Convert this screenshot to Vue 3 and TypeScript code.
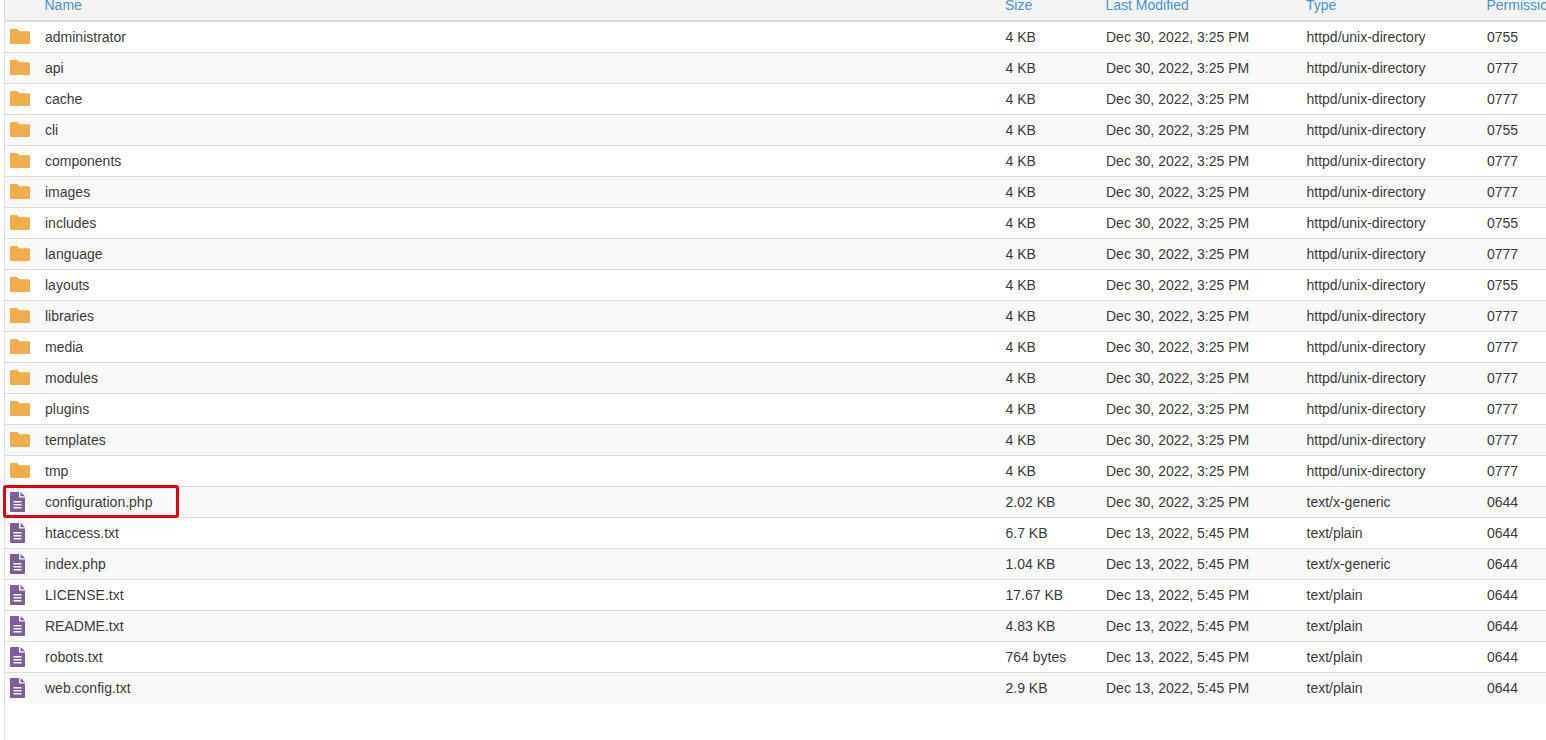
<script setup lang="ts">
interface Row { name: string; size: string; date: string; type: string; perm: string; kind: 'dir' | 'file'; marked?: boolean }
const D = 'Dec 30, 2022, 3:25 PM'
const E = 'Dec 13, 2022, 5:45 PM'
const U = 'httpd/unix-directory'
const dir = (name: string, perm: string): Row => ({ name, size: '4 KB', date: D, type: U, perm, kind: 'dir' })
const file = (name: string, size: string, type: string, date = E, marked = false): Row => ({ name, size, date, type, perm: '0644', kind: 'file', marked })
const rows: Row[] = [
  dir('administrator', '0755'), dir('api', '0777'), dir('cache', '0777'), dir('cli', '0755'),
  dir('components', '0777'), dir('images', '0777'), dir('includes', '0755'), dir('language', '0777'),
  dir('layouts', '0755'), dir('libraries', '0777'), dir('media', '0777'), dir('modules', '0777'),
  dir('plugins', '0777'), dir('templates', '0777'), dir('tmp', '0777'),
  file('configuration.php', '2.02 KB', 'text/x-generic', D, true),
  file('htaccess.txt', '6.7 KB', 'text/plain'),
  file('index.php', '1.04 KB', 'text/x-generic'),
  file('LICENSE.txt', '17.67 KB', 'text/plain'),
  file('README.txt', '4.83 KB', 'text/plain'),
  file('robots.txt', '764 bytes', 'text/plain'),
  file('web.config.txt', '2.9 KB', 'text/plain'),
]
</script>

<template>
  <div class="page">
    <div class="row head">
      <span></span>
      <a>Name</a><a>Size</a><a>Last Modified</a><a>Type</a><a>Permission</a>
    </div>
    <div v-for="r in rows" :key="r.name" class="row item">
      <span class="ico">
        <svg v-if="r.kind === 'dir'" class="folder" width="20" height="15" viewBox="0 0 20 15">
          <path fill="#f0ad4e" d="M1.200 0H7L9.500 2.300H18.800A1.200 1.200 0 0 1 20 3.500V13.800A1.200 1.200 0 0 1 18.800 15H1.200A1.200 1.200 0 0 1 0 13.800V1.200A1.200 1.200 0 0 1 1.200 0Z" />
        </svg>
        <svg v-else width="15" height="20" viewBox="0 0 15 20">
          <path fill="#7c5f9a" fill-rule="evenodd" d="M1 0H9V5.500H15V19A1 1 0 0 1 14 20H1A1 1 0 0 1 0 19V1A1 1 0 0 1 1 0ZM3.500 9V10.500H11.500V9ZM3.500 12V13.500H11.500V12ZM3.500 15V16.500H11.500V15Z" />
          <path fill="#7c5f9a" d="M10.500 0 15 4.300H10.500Z" />
        </svg>
      </span>
      <span class="name" :class="{ marked: r.marked }">{{ r.name }}</span>
      <span>{{ r.size }}</span><span>{{ r.date }}</span><span>{{ r.type }}</span><span>{{ r.perm }}</span>
    </div>
  </div>
</template>

<style>
html, body { margin: 0; height: 100%; overflow: hidden; background: #fff; }
</style>

<style scoped>
.page {
  box-sizing: border-box;
  height: 740px;
  width: 1542px;
  border-left: 1px solid #ddd;
  margin-left: 4px;
  font: 14px/20px "Liberation Sans", Arial, sans-serif;
  color: #3b3b3b;
}
.row {
  display: grid;
  grid-template-columns: 40px 960.5px 100.5px 200.5px 180.500px 80px;
  white-space: nowrap;
}
.head {
  height: 22px;
  box-sizing: border-box;
  background: #f3f3f3;
  border-bottom: 2px solid #ddd;
}
.head a { color: #4b90cd; line-height: 20px; margin: -5px 0 5px -0.5px; }
.item {
  height: 31px;
  box-sizing: border-box;
  border-bottom: 1px solid #ddd;
  align-items: center;
}
.item:nth-child(odd) { background: #f9f9f9; }
.item:last-child { height: 30px; border-bottom: 0; }
.ico { display: flex; align-items: center; padding-left: 5px; height: 100%; }
.folder { margin-top: -1px; }
.name { position: relative; }
.marked::before {
  content: "";
  position: absolute;
  left: -42px;
  top: -7px;
  width: 176px;
  height: 33px;
  box-sizing: border-box;
  border: 3px solid #e6000f;
  border-radius: 3px;
}
</style>
